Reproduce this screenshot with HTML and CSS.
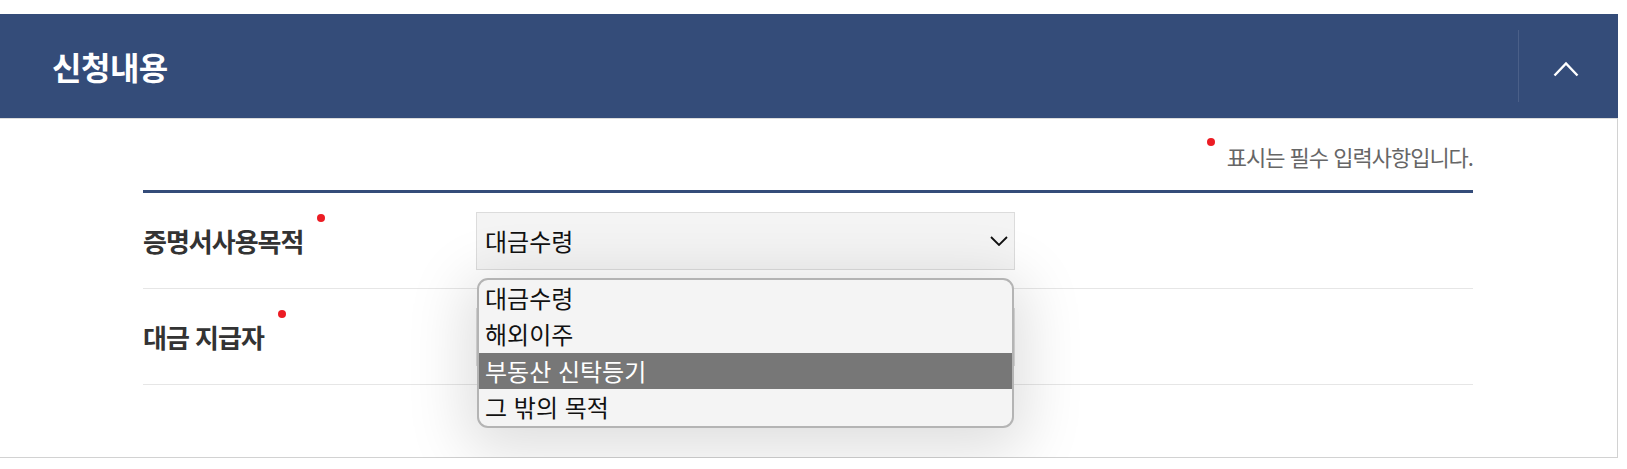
FILE: index.html
```html
<!DOCTYPE html>
<html lang="ko">
<head>
    <meta charset="UTF-8">
    <meta name="viewport" content="width=device-width, initial-scale=1.0">
    <title>신청내용</title>
    <link rel="stylesheet" href="styles.css">
</head>
<body>
    <div class="panel">
        <div class="panel-head">
            <h2 class="panel-title">신청내용</h2>
            <button class="toggle-btn" aria-label="접기">
                <svg width="26" height="16" viewBox="0 0 26 16">
                    <polyline points="1.5,14.5 13,2.5 24.5,14.5" fill="none" stroke="#fff" stroke-width="2.4"/>
                </svg>
            </button>
        </div>

        <div class="panel-body">
            <p class="required-note"><span class="req-dot"></span>표시는 필수 입력사항입니다.</p>

            <div class="form-table">
                <div class="form-row">
                    <div class="form-label">증명서사용목적<span class="req-dot"></span></div>
                    <div class="form-field">
                        <div class="select-box">
                            <span>대금수령</span>
                            <svg width="18" height="10" viewBox="0 0 18 10">
                                <polyline points="1,1 9,9 17,1" fill="none" stroke="#111" stroke-width="1.8"/>
                            </svg>
                        </div>

                        <!-- opened option list -->
                        <ul class="option-list">
                            <li>대금수령</li>
                            <li>해외이주</li>
                            <li class="active">부동산 신탁등기</li>
                            <li>그 밖의 목적</li>
                        </ul>
                    </div>
                </div>
                <div class="form-row">
                    <div class="form-label">대금 지급자<span class="req-dot"></span></div>
                    <div class="form-field">
                        <div class="select-box"></div>
                    </div>
                </div>
            </div>
        </div>
    </div>
</body>
</html>
```

FILE: styles.css
```css
body {
    margin: 0;
    padding: 0;
    background: #fff;
    font-family: "Noto Sans CJK KR", "Noto Sans", sans-serif;
    color: #333;
}

.panel {
    width: 1618px;
    margin-top: 14px;
}

.panel-head {
    height: 104px;
    background-color: #344c79;
    display: flex;
    align-items: center;
    justify-content: space-between;
}

.panel-title {
    margin: 0 0 0 52px;
    font-size: 32px;
    font-weight: bold;
    letter-spacing: -0.5px;
    color: #fff;
}

.toggle-btn {
    width: 100px;
    height: 72px;
    padding: 5px 6px 0 0;
    background: none;
    border: none;
    border-left: 1px solid #4a5f88;
    display: flex;
    align-items: center;
    justify-content: center;
    cursor: pointer;
}

.panel-body {
    border-top: 1px solid #dcdcdc;
    border-right: 1px solid #d2d2d2;
    border-bottom: 1px solid #d2d2d2;
    padding: 22px 144px 72px 143px;
}

.req-dot {
    display: inline-block;
    width: 8px;
    height: 8px;
    border-radius: 50%;
    background-color: #ec1c24;
    position: relative;
    top: -30px;
}

.required-note {
    margin: 0 0 19px 0;
    text-align: right;
    font-size: 22px;
    line-height: 30px;
    letter-spacing: -1px;
    color: #666;
}

.required-note .req-dot {
    margin-right: 12px;
    top: -20px;
}

.form-table {
    border-top: 3px solid #344c79;
}

.form-row {
    display: flex;
    align-items: center;
    height: 95px;
    border-bottom: 1px solid #e6e6e6;
}

.form-label {
    width: 333px;
    font-size: 26px;
    font-weight: bold;
    letter-spacing: -1px;
    color: #333;
}

.form-label .req-dot {
    margin-left: 14px;
}

.form-field {
    position: relative;
}

.select-box {
    width: 523px;
    height: 56px;
    background-color: #f4f4f4;
    border: 1px solid #dcdcdc;
    display: flex;
    align-items: center;
    justify-content: space-between;
    padding: 0 6px 0 8px;
    font-size: 24px;
    color: #111;
}

.option-list {
    position: absolute;
    top: 66px;
    left: 1px;
    width: 533px;
    margin: 0;
    padding: 0;
    list-style: none;
    background-color: #f4f4f4;
    border: 2px solid #b4b4b4;
    border-radius: 11px;
    overflow: hidden;
    box-shadow: 0 12px 60px 12px rgba(0, 0, 0, 0.13);
    z-index: 2;
}

.option-list li {
    height: 36.5px;
    line-height: 36px;
    padding-left: 6px;
    font-size: 24px;
    color: #111;
}

.option-list li.active {
    background-color: #777;
    color: #fff;
}
```
